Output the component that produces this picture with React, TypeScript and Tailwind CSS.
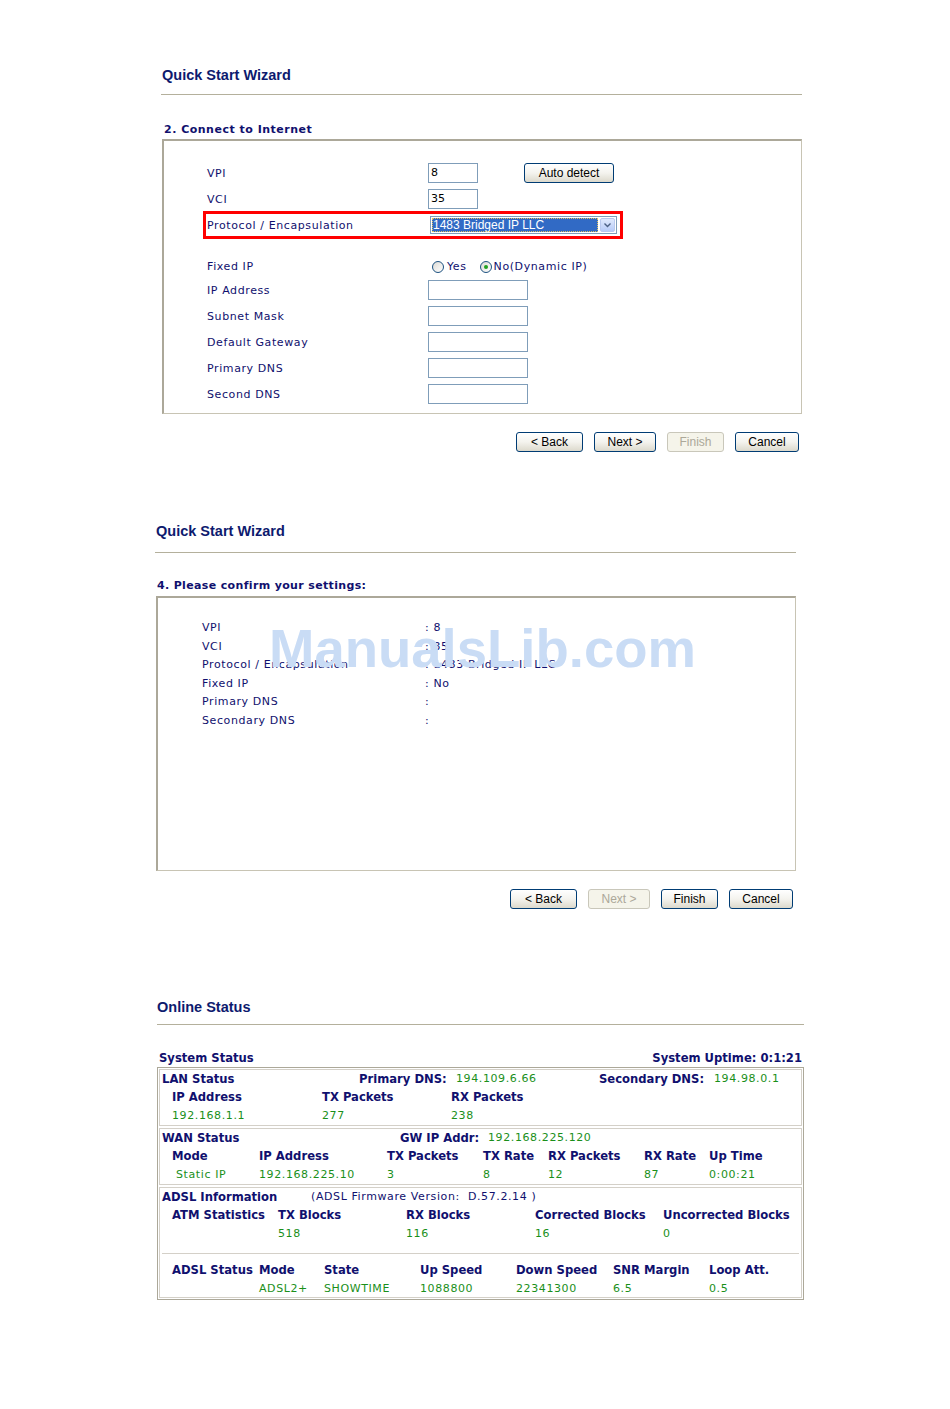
import React from 'react';

// 旧ルーター管理画面風の3パネル (Quick Start Wizard x2 + Online Status)

const navy = 'text-[#10106e]';
const green = 'text-[#1a8f1a]';
const label = "font-['DejaVu_Sans',sans-serif] text-[11px] tracking-[0.6px]";
const bold = "font-['DejaVu_Sans',sans-serif] text-[11.6px] font-bold";

function Title({ children }: { children: React.ReactNode }) {
  return (
    <div className="h-[20px] flex items-center font-['Liberation_Sans',Arial,sans-serif] text-[14.5px] font-bold text-[#0d1a6e]">
      {children}
    </div>
  );
}

function XpButton({ children, w, disabled }: { children: React.ReactNode; w: string; disabled?: boolean }) {
  return (
    <div
      className={`${w} h-[20px] flex items-center justify-center rounded-[3px] border font-['Liberation_Sans',Arial,sans-serif] text-[12px] ${
        disabled
          ? 'border-[#c9c7ba] bg-[#f5f4ea] text-[#aca899]'
          : 'border-[#003c74] bg-gradient-to-b from-white via-[#f4f3ee] to-[#dcd9cc] text-black'
      }`}
    >
      {children}
    </div>
  );
}

function TextBox({ value, w }: { value?: string; w: string }) {
  return (
    <div className={`${w} h-[20px] border border-[#7f9db9] bg-white flex items-center pl-[2px] font-['DejaVu_Sans',sans-serif] text-[11px] text-black`}>
      {value}
    </div>
  );
}

function Radio({ checked }: { checked?: boolean }) {
  return (
    <span className="w-[12px] h-[12px] rounded-full border border-[#1c5180] bg-gradient-to-br from-[#dcdad5] to-white flex items-center justify-center">
      {checked && <span className="w-[4px] h-[4px] rounded-full bg-[#21a121]" />}
    </span>
  );
}

function FormRow({ name, children }: { name: string; children?: React.ReactNode }) {
  return (
    <div className="flex items-center h-[20px] pl-[43px]">
      <div className={`w-[221px] translate-y-[1px] ${label} ${navy}`}>{name}</div>
      {children}
    </div>
  );
}

function ConfirmRow({ name, value }: { name: string; value: string }) {
  return (
    <div className={`flex items-center h-[18.5px] pl-[44px] ${label} ${navy}`}>
      <div className="w-[223px]">{name}</div>
      <div>: {value}</div>
    </div>
  );
}

function ButtonBar({ nextDisabled, finishDisabled }: { nextDisabled?: boolean; finishDisabled?: boolean }) {
  return (
    <div className="flex justify-end gap-[11px] pr-[3px]">
      <XpButton w="w-[67px]">&lt; Back</XpButton>
      <XpButton w="w-[62px]" disabled={nextDisabled}>Next &gt;</XpButton>
      <XpButton w="w-[57px]" disabled={finishDisabled}>Finish</XpButton>
      <XpButton w="w-[64px]">Cancel</XpButton>
    </div>
  );
}

const panel = 'border border-[#c8c4b4] border-t-[#aca899] border-l-[#aca899] border-t-2 border-l-2';

export default function App() {
  return (
    <div className="w-[950px] h-[1409px] bg-white">
      {/* Section 1: 2. Connect to Internet */}
      <div className="ml-[161px] w-[641px] pt-[66px]">
        <div className="pl-[1px]"><Title>Quick Start Wizard</Title></div>
        <div className="mt-[8px] border-t border-[#b4b09c]" />
        <div className={`mt-[28px] h-[14px] flex items-center pl-[3px] font-['DejaVu_Sans',sans-serif] text-[11px] font-bold tracking-[0.5px] ${navy}`}>
          2. Connect to Internet
        </div>
        <div className={`mt-[2px] ml-[1px] h-[275px] ${panel} pt-[22px]`}>
          <FormRow name="VPI">
            <TextBox w="w-[50px]" value="8" />
            <div className="ml-[46px]">
              <XpButton w="w-[90px]">Auto detect</XpButton>
            </div>
          </FormRow>
          <div className="mt-[6px]">
            <FormRow name="VCI">
              <TextBox w="w-[50px]" value="35" />
            </FormRow>
          </div>
          <div className="mt-[2px] ml-[39px] w-[420px] h-[28px] border-[3px] border-[#ff0000] flex items-center pl-[1px]">
            <div className={`w-[223px] translate-y-[1px] ${label} ${navy}`}>Protocol / Encapsulation</div>
            <div className="w-[187px] h-[18px] border border-[#7f9db9] bg-white flex items-stretch p-[1px]">
              <div className="flex-1 bg-[#316ac5] outline-1 outline-dotted outline-[#e0c060] -outline-offset-1 flex items-center pl-[1px] font-['Liberation_Sans',Arial,sans-serif] text-[12px] text-white">
                1483 Bridged IP LLC
              </div>
              <div className="w-[15px] ml-[2px] rounded-[2px] border border-[#b9c9ef] bg-gradient-to-b from-[#e0e9fd] to-[#b7cbf8] flex items-center justify-center">
                <svg width="7" height="5" viewBox="0 0 7 5">
                  <path d="M0.5 0.5 L3.5 3.5 L6.5 0.5" fill="none" stroke="#4d6185" strokeWidth="1.4" />
                </svg>
              </div>
            </div>
          </div>
          <div className="mt-[17px]">
            <FormRow name="Fixed IP">
              <div className={`flex items-center pl-[4px] translate-y-[1px] ${label} ${navy}`}>
                <Radio />
                <span className="ml-[3px]">Yes</span>
                <span className="ml-[13px]"><Radio checked /></span>
                <span className="ml-[2px]">No(Dynamic IP)</span>
              </div>
            </FormRow>
          </div>
          <div className="mt-[4px] flex flex-col gap-[6px]">
            <FormRow name="IP Address"><TextBox w="w-[100px]" /></FormRow>
            <FormRow name="Subnet Mask"><TextBox w="w-[100px]" /></FormRow>
            <FormRow name="Default Gateway"><TextBox w="w-[100px]" /></FormRow>
            <FormRow name="Primary DNS"><TextBox w="w-[100px]" /></FormRow>
            <FormRow name="Second DNS"><TextBox w="w-[100px]" /></FormRow>
          </div>
        </div>
        <div className="mt-[18px]">
          <ButtonBar finishDisabled />
        </div>
      </div>

      {/* Section 2: 4. Please confirm your settings */}
      <div className="ml-[155px] w-[641px] mt-[70px]">
        <div className="pl-[1px]"><Title>Quick Start Wizard</Title></div>
        <div className="mt-[10px] border-t border-[#b4b09c]" />
        <div className={`mt-[26px] h-[14px] flex items-center pl-[2px] font-['DejaVu_Sans',sans-serif] text-[11px] font-bold tracking-[0.35px] ${navy}`}>
          4. Please confirm your settings:
        </div>
        <div className={`relative mt-[3px] ml-[1px] h-[275px] ${panel} pt-[21px]`}>
          <ConfirmRow name="VPI" value="8" />
          <ConfirmRow name="VCI" value="35" />
          <ConfirmRow name="Protocol / Encapsulation" value="1483 Bridged IP LLC" />
          <ConfirmRow name="Fixed IP" value="No" />
          <ConfirmRow name="Primary DNS" value="" />
          <ConfirmRow name="Secondary DNS" value="" />
          {/* watermark */}
          <div className="absolute left-[111px] top-[24px] leading-none font-['Liberation_Sans',Arial,sans-serif] text-[54.5px] font-bold text-[#c9dcf5] whitespace-nowrap">
            ManualsLib.com
          </div>
        </div>
        <div className="mt-[18px]">
          <ButtonBar nextDisabled />
        </div>
      </div>

      {/* Section 3: Online Status */}
      <div className="ml-[157px] w-[647px] mt-[89px]">
        <Title>Online Status</Title>
        <div className="mt-[6px] border-t border-[#b4b09c]" />
        <div className={`mt-[27px] h-[14px] flex items-center justify-between px-[2px] ${bold} ${navy}`}>
          <span>System Status</span>
          <span>System Uptime: 0:1:21</span>
        </div>
        <div className="mt-[1px] border border-[#aca899] p-[1px] flex flex-col gap-[2px]">
          {/* LAN */}
          <div className="h-[57px] border border-[#d4d0c8] pl-[2px]">
            <div className={`h-[18.5px] grid grid-cols-[197px_97px_143px_115px_1fr] items-center ${navy}`}>
              <span className={`${bold} text-[11.5px]`}>LAN Status</span>
              <span className={bold}>Primary DNS:</span>
              <span className={`${label} ${green}`}>194.109.6.66</span>
              <span className={bold}>Secondary DNS:</span>
              <span className={`${label} ${green}`}>194.98.0.1</span>
            </div>
            <div className={`h-[18.5px] pl-[10px] grid grid-cols-[150px_129px_1fr] items-center ${bold} ${navy}`}>
              <span>IP Address</span>
              <span>TX Packets</span>
              <span>RX Packets</span>
            </div>
            <div className={`h-[18.5px] pl-[10px] grid grid-cols-[150px_129px_1fr] items-center ${label} ${green}`}>
              <span>192.168.1.1</span>
              <span>277</span>
              <span>238</span>
            </div>
          </div>
          {/* WAN */}
          <div className="h-[57px] border border-[#d4d0c8] pl-[2px]">
            <div className={`h-[18.5px] grid grid-cols-[238px_88px_1fr] items-center ${navy}`}>
              <span className={`${bold} text-[11.5px]`}>WAN Status</span>
              <span className={bold}>GW IP Addr:</span>
              <span className={`${label} ${green}`}>192.168.225.120</span>
            </div>
            <div className={`h-[18.5px] pl-[10px] grid grid-cols-[87px_128px_96px_65px_96px_65px_1fr] items-center ${bold} ${navy}`}>
              <span>Mode</span>
              <span>IP Address</span>
              <span>TX Packets</span>
              <span>TX Rate</span>
              <span>RX Packets</span>
              <span>RX Rate</span>
              <span>Up Time</span>
            </div>
            <div className={`h-[18.5px] pl-[10px] grid grid-cols-[87px_128px_96px_65px_96px_65px_1fr] items-center ${label} ${green}`}>
              <span className="pl-[4px]">Static IP</span>
              <span>192.168.225.10</span>
              <span>3</span>
              <span>8</span>
              <span>12</span>
              <span>87</span>
              <span>0:00:21</span>
            </div>
          </div>
          {/* ADSL */}
          <div className="h-[111px] border border-[#d4d0c8] pl-[2px]">
            <div className={`h-[18.5px] grid grid-cols-[149px_1fr] items-center ${navy}`}>
              <span className={`${bold} text-[11.5px]`}>ADSL Information</span>
              <span className={label}>(ADSL Firmware Version:&nbsp; D.57.2.14 )</span>
            </div>
            <div className={`h-[18.5px] pl-[10px] grid grid-cols-[106px_128px_129px_128px_1fr] items-center ${bold} ${navy}`}>
              <span>ATM Statistics</span>
              <span>TX Blocks</span>
              <span>RX Blocks</span>
              <span>Corrected Blocks</span>
              <span>Uncorrected Blocks</span>
            </div>
            <div className={`h-[18.5px] pl-[10px] grid grid-cols-[106px_128px_129px_128px_1fr] items-center ${label} ${green}`}>
              <span />
              <span>518</span>
              <span>116</span>
              <span>16</span>
              <span>0</span>
            </div>
            <div className="mt-[9px] mr-[2px] border-t border-[#d4d0c8]" />
            <div className={`mt-[8px] h-[18.5px] pl-[10px] grid grid-cols-[87px_65px_96px_96px_97px_96px_1fr] items-center ${bold} ${navy}`}>
              <span>ADSL Status</span>
              <span>Mode</span>
              <span>State</span>
              <span>Up Speed</span>
              <span>Down Speed</span>
              <span>SNR Margin</span>
              <span>Loop Att.</span>
            </div>
            <div className={`h-[18.5px] pl-[10px] grid grid-cols-[87px_65px_96px_96px_97px_96px_1fr] items-center ${label} ${green}`}>
              <span />
              <span>ADSL2+</span>
              <span>SHOWTIME</span>
              <span>1088800</span>
              <span>22341300</span>
              <span>6.5</span>
              <span>0.5</span>
            </div>
          </div>
        </div>
      </div>
    </div>
  );
}
